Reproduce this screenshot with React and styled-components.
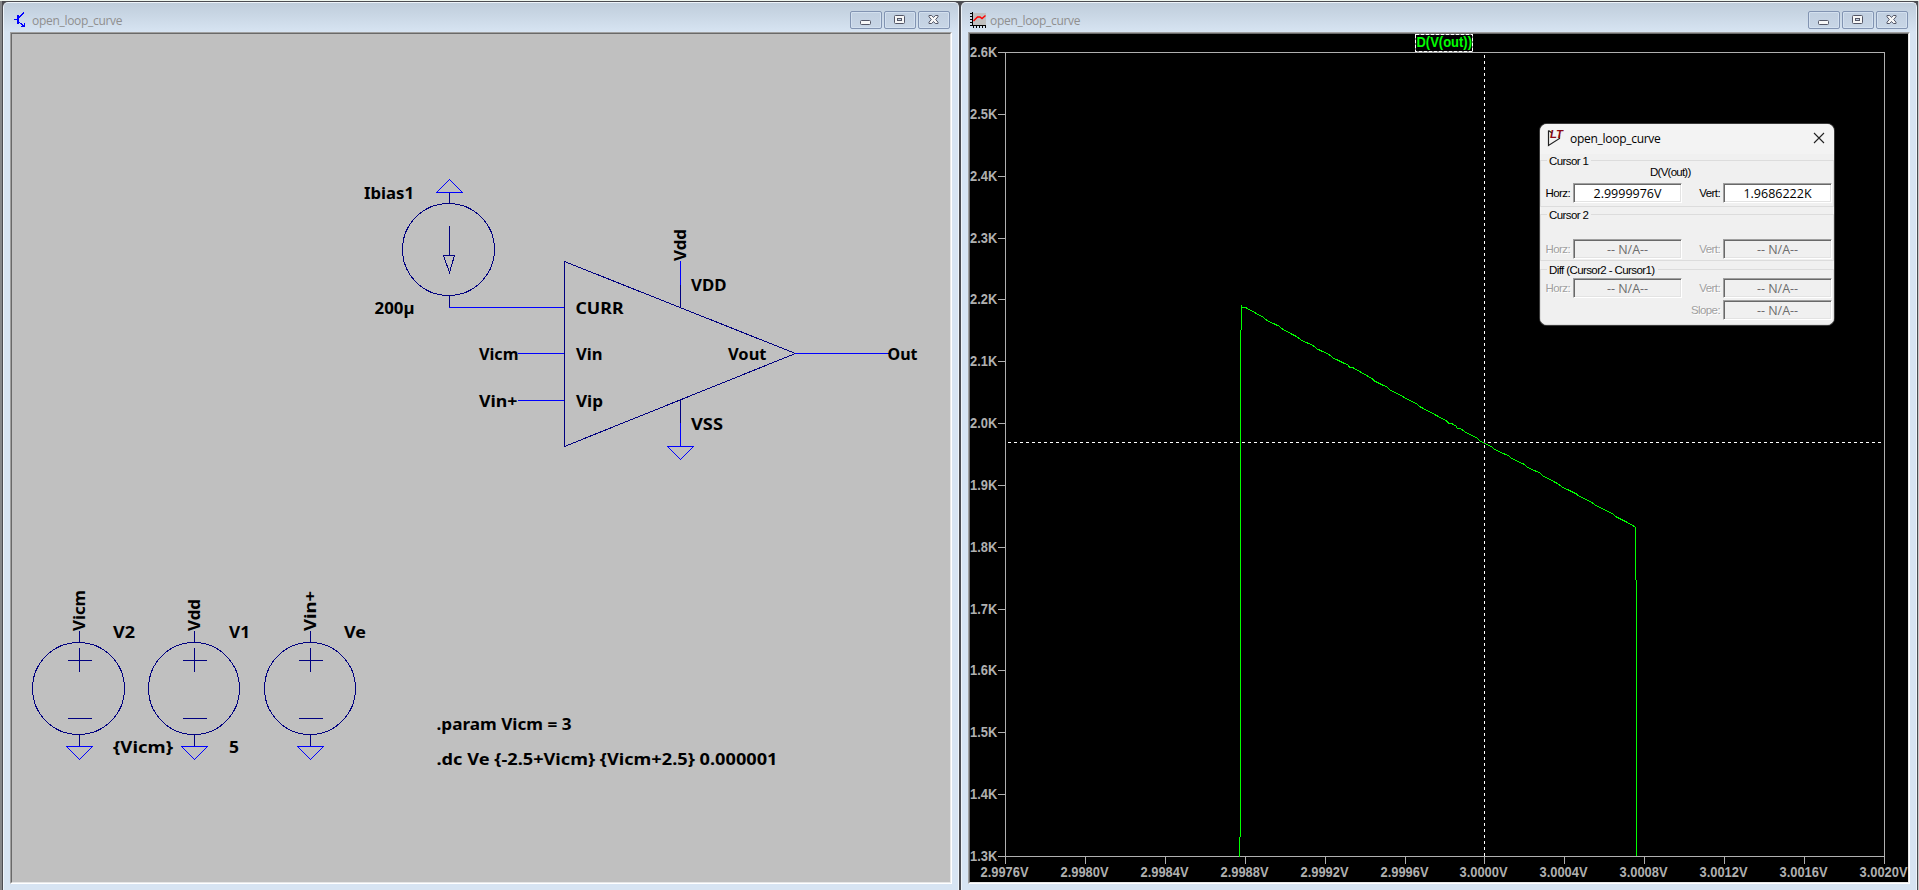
import React from "react";
import styled, { createGlobalStyle } from "styled-components";

const GlobalStyle = createGlobalStyle`
  * { box-sizing: border-box; }
  html, body { margin: 0; padding: 0; overflow: hidden; }
`;

const WIRE = "#0000ff";
const SYMBOL = "#000080";
const AXIS = "#b0b0b0";
const TRACE = "#00ff00";

const Desktop = styled.main`
  position: relative;
  width: 1919px;
  height: 890px;
  display: flex;
  gap: 2px;
  padding: 1px 2px 0 3px;
  background: #4b4c51;
  border-top: 1px solid #eef5ee;
  box-shadow: inset 2px 0 0 #858688, inset -1px 0 0 #c9cacb;
  font-family: "Open Sans", "Noto Sans", sans-serif;
`;

const Frame = styled.section`
  width: 956px;
  height: 888px;
  display: flex;
  flex-direction: column;
  padding: 0 6px 6px;
  border: 1px solid #eef4fa;
  border-bottom: 0;
  border-radius: 5px 5px 0 0;
  background: linear-gradient(#bfcddb 0, #d7e4f2 29px);
`;

const TitleBar = styled.header`
  height: 29px;
  flex: none;
  display: flex;
  align-items: flex-start;
  padding-left: ${(p) => p.$inset}px;
  padding-right: 2px;
`;

const TitleIcon = styled.svg`
  width: 17px;
  height: 17px;
  margin-top: 9px;
  flex: none;
`;

const TitleText = styled.h1`
  flex: 1;
  margin: 9px 0 0 ${(p) => p.$gap}px;
  font-size: 12px;
  line-height: 17px;
  font-weight: 400;
  letter-spacing: -0.3px;
  color: #8f8f8f;
`;

const Buttons = styled.div`
  display: flex;
  gap: 2px;
  margin-top: 8px;
`;

const FrameButton = styled.button`
  width: 32px;
  height: 18px;
  padding: 0;
  display: flex;
  align-items: center;
  justify-content: center;
  border: 1px solid #8294b2;
  border-radius: 2px;
  background: linear-gradient(#c0cfe0, #c8d6e6);
  box-shadow: inset 0 0 0 1px #d3e0ef;
`;

const Client = styled.div`
  width: 942px;
  height: 852px;
  flex: none;
  border: 1px solid;
  border-color: #a0a0a0 #ffffff #ffffff #a0a0a0;
  background: ${(p) => p.$fill};
`;

const ClientInner = styled.div`
  width: 940px;
  height: 850px;
  border: 1px solid;
  border-color: #696969 #e6e6e6 #e6e6e6 #696969;
`;

const Canvas = styled.svg`
  display: block;
  width: 938px;
  height: 848px;
`;

const SchematicText = styled.text`
  font-family: "Noto Sans", "Open Sans", sans-serif;
  font-size: 16.5px;
  font-weight: 700;
  fill: #000;
`;

const AxisText = styled.text`
  font-family: "Liberation Sans", Arial, sans-serif;
  font-size: 14px;
  font-weight: 700;
  fill: ${(p) => p.$color || AXIS};
`;

function WindowButtons() {
  return (
    <Buttons>
      <FrameButton aria-label="Minimize">
        <svg width="12" height="12">
          <rect x="0.5" y="6.5" width="10" height="4" rx="1" fill="#f7f7f7" stroke="#535666" />
        </svg>
      </FrameButton>
      <FrameButton aria-label="Restore">
        <svg width="12" height="12">
          <rect x="0.5" y="1.5" width="10" height="8" rx="1" fill="#f7f7f7" stroke="#535666" />
          <rect x="3.5" y="4.5" width="4" height="2" fill="#c6d4e4" stroke="#535666" />
        </svg>
      </FrameButton>
      <FrameButton aria-label="Close">
        <svg width="12" height="12">
          <path
            d="M1 1.5H3.7L5.5 3.5L7.3 1.5H10V2.8L7.7 5.5L10 8.2V9.5H7.3L5.5 7.5L3.7 9.5H1V8.2L3.3 5.5L1 2.8Z"
            fill="#f7f7f7"
            stroke="#535666"
          />
        </svg>
      </FrameButton>
    </Buttons>
  );
}

function Label({ x, y, w, children }) {
  return (
    <SchematicText x={x} y={y} textLength={w} lengthAdjust="spacingAndGlyphs">
      {children}
    </SchematicText>
  );
}

function UpLabel({ x, y, w, children }) {
  return (
    <SchematicText
      transform={`translate(${x} ${y}) rotate(-90)`}
      textLength={w}
      lengthAdjust="spacingAndGlyphs"
    >
      {children}
    </SchematicText>
  );
}

function Ground({ x, y, up }) {
  const tip = up ? y - 13 : y + 13;
  return <path d={`M${x - 13} ${y}H${x + 13}L${x} ${tip}Z`} stroke={WIRE} />;
}

function VoltageSource({ x, cx, r }) {
  return (
    <g>
      <g stroke={SYMBOL}>
        <ellipse cx={cx} cy="688.5" rx={r} ry="46" />
        <path d={`M${x} 631V643M${x} 734V746M${x - 12} 660.5H${x + 12}M${x} 648V672M${x - 12} 718.5H${x + 12}`} />
      </g>
      <Ground x={x} y={746.5} />
    </g>
  );
}

function Schematic() {
  return (
    <Canvas viewBox="12 34 938 848">
      <g fill="none" strokeWidth="1" shapeRendering="crispEdges">
        <Ground x={449.5} y={192.5} up />
        <g stroke={SYMBOL}>
          <circle cx="448.5" cy="249.5" r="46" />
          <path d="M449.5 193V204M449.5 226V255M443.5 255.5H454.5L449.5 272.5ZM449.5 295V307" />
          <path d="M564.5 261.5V446.5L795.5 353.5Z" />
          <path d="M680.5 284V307.5M680.5 400V423" />
        </g>
        <path
          stroke={WIRE}
          d="M449 307.5H564M518 353.5H564M518 400.5H564M795 353.5H889M680.5 261V285M680.5 423V446"
        />
        <Ground x={680.5} y={446.5} />
        <VoltageSource x={79.5} cx={78.5} r={46} />
        <VoltageSource x={194.5} cx={194} r={45.5} />
        <VoltageSource x={310.5} cx={310} r={45.5} />
      </g>
      <Label x={364} y={199} w={50}>Ibias1</Label>
      <Label x={374.5} y={314} w={40}>200µ</Label>
      <Label x={575.5} y={314} w={48}>CURR</Label>
      <Label x={479} y={360} w={39.5}>Vicm</Label>
      <Label x={479} y={406.5} w={38.5}>Vin+</Label>
      <Label x={576} y={360} w={26.5}>Vin</Label>
      <Label x={576} y={406.5} w={27}>Vip</Label>
      <Label x={691} y={291} w={35.5}>VDD</Label>
      <Label x={691} y={430} w={32}>VSS</Label>
      <Label x={728} y={360} w={38.5}>Vout</Label>
      <Label x={887.5} y={360} w={30}>Out</Label>
      <UpLabel x={686} y={261} w={32}>Vdd</UpLabel>
      <UpLabel x={85} y={631} w={41}>Vicm</UpLabel>
      <UpLabel x={200} y={631} w={32}>Vdd</UpLabel>
      <UpLabel x={315.5} y={631} w={40}>Vin+</UpLabel>
      <Label x={113} y={638} w={22}>V2</Label>
      <Label x={229} y={638} w={21}>V1</Label>
      <Label x={344} y={638} w={22}>Ve</Label>
      <Label x={113} y={753} w={60}>{"{Vicm}"}</Label>
      <Label x={229} y={753} w={10}>5</Label>
      <Label x={436.5} y={730} w={135}>.param Vicm = 3</Label>
      <Label x={436.5} y={765} w={341}>{".dc Ve {-2.5+Vicm} {Vicm+2.5} 0.000001"}</Label>
    </Canvas>
  );
}

const GAIN_TICKS = ["2.6K", "2.5K", "2.4K", "2.3K", "2.2K", "2.1K", "2.0K", "1.9K", "1.8K", "1.7K", "1.6K", "1.5K", "1.4K", "1.3K"];
const VOLT_TICKS = ["2.9976V", "2.9980V", "2.9984V", "2.9988V", "2.9992V", "2.9996V", "3.0000V", "3.0004V", "3.0008V", "3.0012V", "3.0016V", "3.0020V"];

const SLOPE = [
  [1241.5, 307.5], [1245.5, 307.5], [1263.3, 317.3], [1266.7, 320.3], [1279.3, 326.3],
  [1282.7, 329.3], [1297.3, 337], [1301, 340], [1313.3, 345.7], [1316.7, 348.7],
  [1329.3, 354.7], [1333.3, 358], [1348.3, 365.3], [1349.5, 367.5], [1352.5, 367.5],
  [1371.7, 378.3], [1375, 381.3], [1386.7, 387], [1390, 390], [1401.7, 395.7],
  [1405, 398], [1416.7, 404], [1419.3, 406.3], [1446.7, 421], [1448.7, 423.5],
  [1451.5, 423.5], [1456, 426], [1457.5, 428.5], [1460.5, 428.5], [1465.7, 432.3],
  [1476.7, 437.7], [1479.7, 440.7], [1483.7, 442.7], [1491.7, 446.7], [1495, 449.7],
  [1508.3, 455.7], [1511.7, 458.3], [1524, 464.3], [1527.3, 467.3], [1540, 473],
  [1543.3, 476], [1558.3, 484], [1561.7, 486.7], [1576, 493.7], [1579.3, 496.3],
  [1591.7, 502.3], [1595, 505], [1612.7, 514], [1616, 516.7], [1631.7, 524.7], [1635.5, 527.5],
];

function Plot() {
  const tickY = (i) => Math.round(52 + (i * 804) / 13) + 0.5;
  const tickX = (i) => Math.round(1005 + (i * 879) / 11) + 0.5;
  return (
    <Canvas viewBox="970 34 938 848">
      <g fill="none" shapeRendering="crispEdges">
        <rect x="1005.5" y="52.5" width="879" height="804" stroke={AXIS} />
        <path
          stroke={AXIS}
          d={
            GAIN_TICKS.map((_, i) => `M998 ${tickY(i)}H1005`).join("") +
            VOLT_TICKS.map((_, i) => `M${tickX(i)} 857V864`).join("")
          }
        />
        <path d="M1484.5 55V856M1008 442.5H1884" stroke="#fff" strokeDasharray="3 3" />
        <path
          stroke={TRACE}
          d={`M1239.5 857V837M1240.5 837V330M1241.5 330V305M${SLOPE.map((p) => p.join(" ")).join("L")}M1635.5 527V580M1636.5 580V856`}
        />
        <rect x="1484" y="442" width="1" height="1" fill="#ff00ff" />
        <rect x="1415.5" y="34.5" width="57" height="17" stroke="#8a8a8a" />
        <rect x="1415.5" y="34.5" width="57" height="17" stroke="#fff" strokeDasharray="3 2" />
      </g>
      {GAIN_TICKS.map((t, i) => (
        <AxisText key={t} x={970} y={tickY(i) + 4.5} textLength="27.2" lengthAdjust="spacingAndGlyphs">
          {t}
        </AxisText>
      ))}
      {VOLT_TICKS.map((t, i) => (
        <AxisText key={t} x={tickX(i) - 25} y="877" textLength="48" lengthAdjust="spacingAndGlyphs">
          {t}
        </AxisText>
      ))}
      <AxisText $color={TRACE} x="1416.5" y="47" textLength="55.5" lengthAdjust="spacingAndGlyphs">
        D(V(out))
      </AxisText>
    </Canvas>
  );
}

const Dialog = styled.aside`
  position: absolute;
  left: 1540px;
  top: 123px;
  width: 294px;
  height: 201px;
  display: flex;
  flex-direction: column;
  overflow: hidden;
  border-radius: 7px;
  background: #f0f0f0;
  box-shadow: 0 0 0 1px #3a3a3a;
`;

const DialogTitle = styled.header`
  height: 30px;
  flex: none;
  display: flex;
  align-items: center;
  gap: 6px;
  padding: 0 9px 2px 7px;
  background: #f3f3f3;
  font-size: 12px;
  color: #000;
`;

const DialogName = styled.span`
  flex: 1;
  letter-spacing: -0.28px;
`;

const Group = styled.div`
  position: relative;
  flex: none;
  height: ${(p) => p.$h}px;
  margin-top: ${(p) => p.$gap}px;
  padding-top: ${(p) => p.$top}px;
  border: 1px solid #dcdcdc;
  display: flex;
  flex-direction: column;
  gap: 2px;
`;

const compact = `
  font-family: "Liberation Sans", Arial, sans-serif;
  font-size: 11.5px;
  line-height: 14px;
  letter-spacing: -0.6px;
  white-space: nowrap;
`;

const Legend = styled.span`
  ${compact}
  position: absolute;
  left: 6px;
  top: -7px;
  padding: 0 3px 0 2px;
  background: #f0f0f0;
  color: #000;
`;

const TraceName = styled.div`
  ${compact}
  height: 20px;
  padding: 4px 0 0 109px;
  letter-spacing: -0.75px;
  color: #000;
`;

const FieldRow = styled.div`
  display: flex;
  height: 20px;
  align-items: center;
  justify-content: flex-end;
  padding-right: 1px;
`;

const FieldLabel = styled.label`
  ${compact}
  width: ${(p) => p.$w}px;
  padding-right: 3px;
  text-align: right;
  color: ${(p) => (p.$off ? "#a0a0a0" : "#000")};
  text-shadow: ${(p) => (p.$off ? "1px 1px 0 #fff" : "none")};
`;

const Field = styled.output`
  width: 109px;
  height: 20px;
  border: 1px solid;
  border-color: #a0a0a0 #fff #fff #a0a0a0;
  box-shadow: inset 1px 1px 0 #696969, inset -1px -1px 0 #e3e3e3;
  background: ${(p) => (p.$off ? "#f0f0f0" : "#fff")};
  color: ${(p) => (p.$off ? "#6d6d6d" : "#000")};
  padding-top: 1px;
  font-size: 12.5px;
  line-height: 18px;
  text-align: center;
`;

function Pair({ a = "-- N/A--", b = "-- N/A--", off }) {
  return (
    <FieldRow>
      <FieldLabel $w={32} $off={off}>Horz:</FieldLabel>
      <Field $off={off}>{a}</Field>
      <FieldLabel $w={41} $off={off}>Vert:</FieldLabel>
      <Field $off={off}>{b}</Field>
    </FieldRow>
  );
}

const LogoText = styled.text`
  font-family: "Liberation Sans", sans-serif;
  font-size: 11px;
  font-weight: 700;
  font-style: italic;
  fill: #8b0a14;
`;

function CursorDialog() {
  return (
    <Dialog>
      <DialogTitle>
        <svg width="17" height="18">
          <path d="M1.5 1.5V16.5L12.5 9.5V6M1.5 1.5L5 4" fill="none" stroke="#222" strokeWidth="1.2" />
          <LogoText x="3" y="9" textLength="13" lengthAdjust="spacingAndGlyphs">LT</LogoText>
        </svg>
        <DialogName>open_loop_curve</DialogName>
        <svg width="12" height="12">
          <path d="M1 1L11 11M11 1L1 11" stroke="#222" strokeWidth="1.1" />
        </svg>
      </DialogTitle>
      <Group $h={47} $gap={6} $top={0}>
        <Legend>Cursor 1</Legend>
        <TraceName>D(V(out))</TraceName>
        <Pair a="2.9999976V" b="1.9686222K" />
      </Group>
      <Group $h={47} $gap={7} $top={24}>
        <Legend>Cursor 2</Legend>
        <Pair off />
      </Group>
      <Group $h={56} $gap={8} $top={8}>
        <Legend>Diff (Cursor2 - Cursor1)</Legend>
        <Pair off />
        <FieldRow>
          <FieldLabel $w={41} $off>Slope:</FieldLabel>
          <Field $off>-- N/A--</Field>
        </FieldRow>
      </Group>
    </Dialog>
  );
}

export default function App() {
  return (
    <>
      <GlobalStyle />
      <Desktop>
        <Frame>
          <TitleBar $inset={3}>
            <TitleIcon viewBox="13 12 17 17" shapeRendering="crispEdges">
              <path
                d="M14 19.5H18M19 17.5L24 12.5M19 22L24.5 26.5M21 26.5H25M24.5 23V27"
                stroke={WIRE}
                fill="none"
              />
              <rect x="17" y="15" width="2" height="9" fill={WIRE} />
            </TitleIcon>
            <TitleText $gap={2}>open_loop_curve</TitleText>
            <WindowButtons />
          </TitleBar>
          <Client $fill="#c0c0c0">
            <ClientInner>
              <Schematic />
            </ClientInner>
          </Client>
        </Frame>
        <Frame>
          <TitleBar $inset={2}>
            <TitleIcon viewBox="0 0 17 17">
              <rect x="3" y="1" width="13" height="12" fill="#c0c0c0" />
              <path
                d="M2.5 0V13.5H16M0 1.5H2M0 4.5H2M0 7.5H2M0 10.5H2M0 13.5H2M3.5 14V16M6.5 14V16M9.5 14V16M12.5 14V16M15.5 14V16"
                stroke="#000"
                fill="none"
                shapeRendering="crispEdges"
              />
              <path d="M3.5 9L7.5 5L10 5L12 6.5L15.5 3.5" stroke="#f00" strokeWidth="1.4" fill="none" />
            </TitleIcon>
            <TitleText $gap={3}>open_loop_curve</TitleText>
            <WindowButtons />
          </TitleBar>
          <Client $fill="#000">
            <ClientInner>
              <Plot />
            </ClientInner>
          </Client>
        </Frame>
        <CursorDialog />
      </Desktop>
    </>
  );
}
